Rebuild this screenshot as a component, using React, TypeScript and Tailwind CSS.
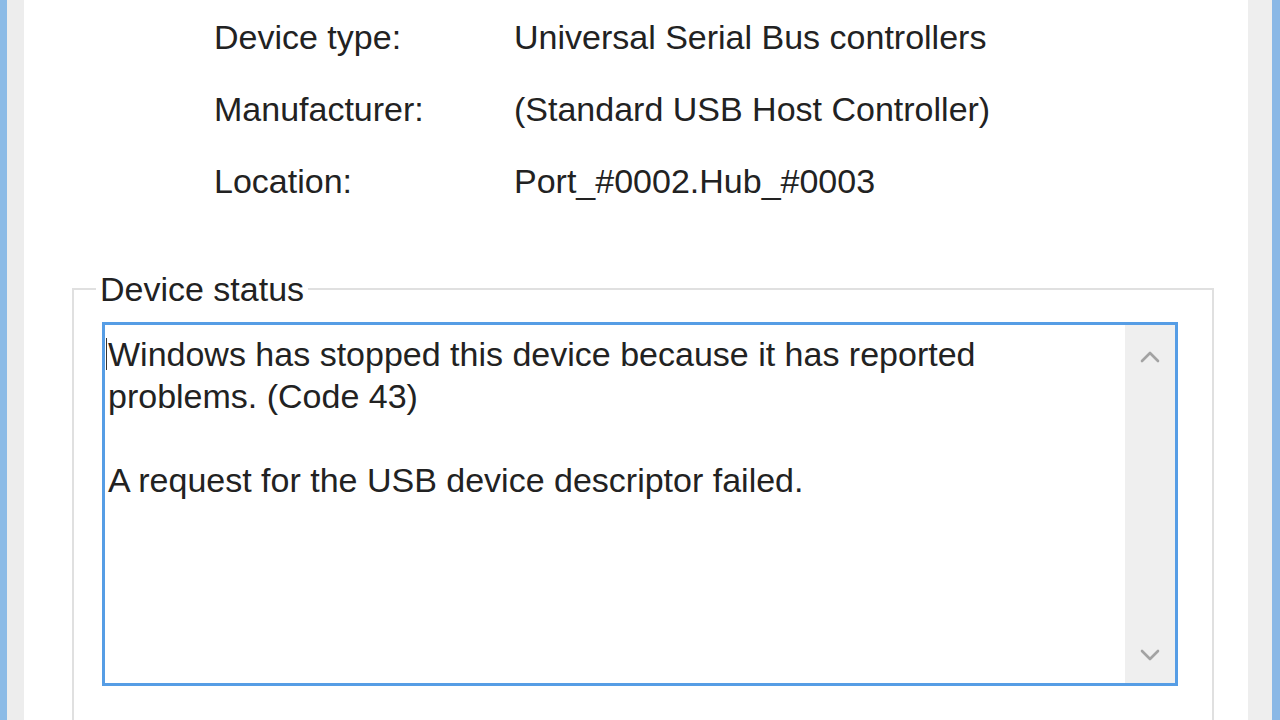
const rows = [
  { label: "Device type:", value: "Universal Serial Bus controllers" },
  { label: "Manufacturer:", value: "(Standard USB Host Controller)" },
  { label: "Location:", value: "Port_#0002.Hub_#0003" },
];

function Chevron({ down = false }: { down?: boolean }) {
  return (
    <svg width="20" height="12" viewBox="0 0 20 12" className="block">
      <path
        d={down ? "M2 2 L10 10 L18 2" : "M2 10 L10 2 L18 10"}
        fill="none"
        stroke="#a3a3a3"
        strokeWidth="2.6"
        strokeLinecap="round"
        strokeLinejoin="round"
      />
    </svg>
  );
}

export default function App() {
  return (
    <div
      className="flex w-[1280px] h-[720px] overflow-hidden bg-white text-[#222] text-[34px]"
      style={{ fontFamily: '"Liberation Sans", Arial, sans-serif' }}
    >
      {/* window frame, left */}
      <div className="w-[7px] shrink-0 bg-[#8cbbe6]" />
      <div className="w-[17px] shrink-0 bg-[#ededed]" />

      {/* dialog page */}
      <div className="flex-1 flex flex-col bg-white">
        <div className="flex flex-col pt-[1px] pl-[190px]">
          {rows.map((r) => (
            <div key={r.label} className="flex items-center h-[72px] leading-[40px]">
              <span className="w-[300px] shrink-0">{r.label}</span>
              <span>{r.value}</span>
            </div>
          ))}
        </div>

        <fieldset className="ml-[48px] mr-[34px] mt-[52px] flex-1 border-[2px] border-b-0 border-[#e0e0e0] p-0 pt-[13px]">
          <legend className="ml-[22px] px-[4px] leading-[40px]">Device status</legend>

          <div className="flex h-[364px] ml-[28px] mr-[34px] border-[3px] border-[#569de5] bg-white">
            <div className="flex-1 pl-[1px] pt-[8px] leading-[42px]">
              <div className="flex items-center">
                <span className="w-[1px] h-[32px] bg-[#333] mr-[1px]" />
                <span>Windows has stopped this device because it has reported</span>
              </div>
              <div className="pl-[2px]">problems. (Code 43)</div>
              <div className="h-[42px]" />
              <div className="pl-[2px]">A request for the USB device descriptor failed.</div>
            </div>
            <div className="w-[50px] shrink-0 bg-[#efefef] flex flex-col items-center justify-between pt-[26px] pb-[22px]">
              <Chevron />
              <Chevron down />
            </div>
          </div>
        </fieldset>
      </div>

      {/* window frame, right */}
      <div className="w-[24px] shrink-0 bg-[#eeeeee]" />
      <div className="w-[8px] shrink-0 bg-[#8ab8e6]" />
    </div>
  );
}
